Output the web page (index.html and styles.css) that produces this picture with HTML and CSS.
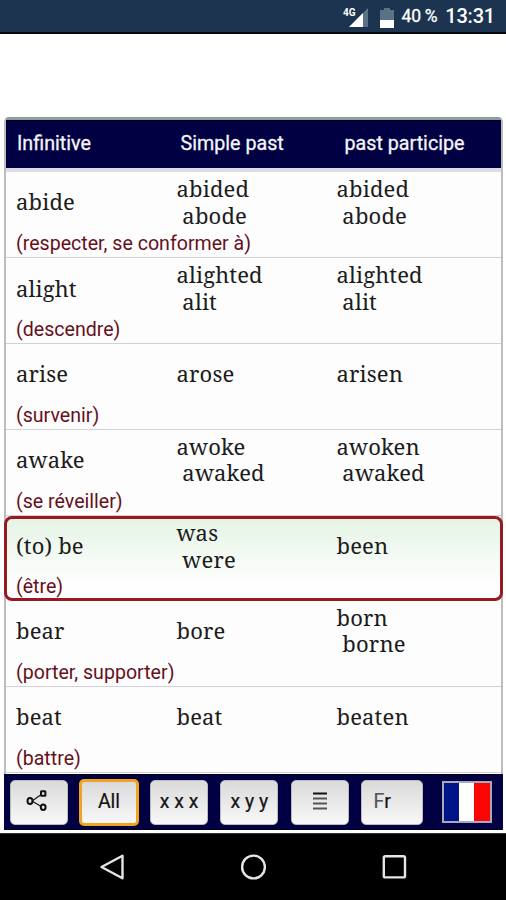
FILE: index.html
```html
<!DOCTYPE html>
<html lang="fr">
<head>
  <meta charset="UTF-8">
  <meta name="viewport" content="width=device-width, initial-scale=1.0">
  <title>Irregular verbs</title>
  <link rel="stylesheet" href="styles.css">
</head>
<body>
  <div class="status_bar">
    <svg class="signal" width="28" height="22" viewBox="0 0 28 22">
      <path d="M6 20 L25 1 V20 Z" fill="#5b7184"/>
      <path d="M6 20 L20 6 V20 Z" fill="#fff"/>
      <text x="0" y="9" class="network">4G</text>
    </svg>
    <svg class="battery" width="14" height="20" viewBox="0 0 14 20">
      <path d="M4 0 H10 V2 H14 V12 H0 V2 H4 Z" fill="#5b7184"/>
      <path d="M0 12 H14 V20 H0 Z" fill="#fff"/>
    </svg>
    <span class="percent">40 %</span>
    <span class="clock">13:31</span>
  </div>
  <div class="main_wrapper">
    <div class="verb_table">
      <div class="table_head">
        <span>Infinitive</span>
        <span>Simple past</span>
        <span>past participe</span>
      </div>
      <div class="verb_list">
        <div class="verb_row">
          <div class="forms"><span>abide</span><span>abided<br>&nbsp;abode</span><span>abided<br>&nbsp;abode</span></div>
          <p>(respecter, se conformer à)</p>
        </div>
        <div class="verb_row">
          <div class="forms"><span>alight</span><span>alighted<br>&nbsp;alit</span><span>alighted<br>&nbsp;alit</span></div>
          <p>(descendre)</p>
        </div>
        <div class="verb_row">
          <div class="forms"><span>arise</span><span>arose</span><span>arisen</span></div>
          <p>(survenir)</p>
        </div>
        <div class="verb_row">
          <div class="forms"><span>awake</span><span>awoke<br>&nbsp;awaked</span><span>awoken<br>&nbsp;awaked</span></div>
          <p>(se réveiller)</p>
        </div>
        <div class="verb_row selected">
          <div class="forms"><span>(to) be</span><span>was<br>&nbsp;were</span><span>been</span></div>
          <p>(être)</p>
        </div>
        <div class="verb_row">
          <div class="forms"><span>bear</span><span>bore</span><span>born<br>&nbsp;borne</span></div>
          <p>(porter, supporter)</p>
        </div>
        <div class="verb_row">
          <div class="forms"><span>beat</span><span>beat</span><span>beaten</span></div>
          <p>(battre)</p>
        </div>
      </div>
    </div>
    <div class="toolbar">
      <button class="share_btn" type="button" aria-label="Share">
        <svg width="22" height="22" viewBox="0 0 22 22" fill="none" stroke="#111">
          <path d="M6 11 L16 4 M6 11 L16 17" stroke-width="1.1"/>
          <ellipse cx="4" cy="11" rx="2.5" ry="2.9" stroke-width="2" fill="#e8e8e8"/>
          <rect x="15" y="1.2" width="4.4" height="4.6" rx="0.5" stroke-width="2" fill="#e8e8e8"/>
          <ellipse cx="17.2" cy="17.2" rx="2.4" ry="2.7" stroke-width="2" fill="#e8e8e8"/>
        </svg>
      </button>
      <button class="all_btn" type="button">All</button>
      <button class="xxx_btn" type="button">x x x</button>
      <button class="xyy_btn" type="button">x y y</button>
      <button class="list_btn" type="button" aria-label="List">
        <svg width="14" height="18" viewBox="0 0 14 18">
          <path d="M0 1.5 H14" stroke="#111" stroke-width="2"/>
          <path d="M0 6.5 H14 M0 11.5 H14 M0 16.5 H14" stroke="#555" stroke-width="2"/>
        </svg>
      </button>
      <button class="lang_btn" type="button"><span>F</span>r</button>
      <div class="flag"></div>
    </div>
  </div>
  <div class="nav_bar">
    <svg width="26" height="26" viewBox="0 0 26 26"><path d="M2.5 13 L23.5 1.8 V24.2 Z"/></svg>
    <svg width="26" height="26" viewBox="0 0 26 26"><circle cx="13.5" cy="13" r="11.4"/></svg>
    <svg width="26" height="26" viewBox="0 0 26 26"><rect x="2.8" y="2.2" width="21.2" height="21.2" rx="1.5"/></svg>
  </div>
</body>
</html>
```
FILE: styles.css
```css
* {
  box-sizing: border-box;
}
body {
  margin: 0;
  width: 506px;
  height: 900px;
  overflow: hidden;
  display: flex;
  flex-direction: column;
  background: #fff;
  font-family: Roboto, Arial, sans-serif;
}
.status_bar {
  display: flex;
  align-items: center;
  justify-content: flex-end;
  height: 34px;
  padding: 0 11px 0 0;
  background: #1c3450;
  border-bottom: 2px solid #05080f;
  color: #fff;
}
.signal {
  margin: 3px 9px 0 0;
}
.network {
  font-size: 10px;
  font-weight: 700;
  fill: #fff;
}
.battery {
  margin: 3px 8px 0 0;
}
.percent {
  margin-right: 8px;
  font-size: 17.5px;
  letter-spacing: -0.3px;
  -webkit-text-stroke: 0.3px #fff;
}
.clock {
  font-size: 20px;
  font-weight: 500;
  letter-spacing: -0.2px;
}
.main_wrapper {
  flex: 1;
  display: flex;
  flex-direction: column;
  padding: 83px 3px 0 4px;
}
.verb_table {
  height: 657px;
  border: 2px solid #bdbdbf;
  border-top: 3px solid #8f9c98;
  border-bottom: 0;
  border-radius: 5px 5px 0 0;
}
.table_head {
  display: grid;
  grid-template-columns: 163.5px 164px 1fr;
  align-items: center;
  height: 48px;
  padding: 0 0 3px 11px;
  border-top: 1px solid #000018;
  background: #000042;
  color: #f4f4f8;
  font-size: 19.7px;
  -webkit-text-stroke: 0.3px #f4f4f8;
}
.verb_list {
  border-top: 4px solid #dcdce4;
  background: #fdfdfe;
}
.verb_row {
  height: 85.8px;
  padding: 0.5px 0 0 10px;
  border-bottom: 1px solid #d2d2d6;
}
.verb_row:first-child {
  height: 86.3px;
}
.forms {
  display: grid;
  grid-template-columns: 160.5px 160px 1fr;
  align-items: center;
  height: 58px;
  font-family: "Noto Serif", "DejaVu Serif Condensed", "DejaVu Serif", serif;
  font-stretch: condensed;
  font-size: 22px;
  letter-spacing: 0.15px;
  line-height: 26.5px;
  color: #1c1c1c;
}
.verb_row p {
  margin: 0;
  padding-top: 0.5px;
  font-size: 19.6px;
  line-height: 26px;
  color: #66101c;
}
.verb_row.selected {
  margin: 0.5px -2px 0;
  padding: 0 0 0 9px;
  height: 84.8px;
  border: 3px solid #951b20;
  border-radius: 8px;
  background: linear-gradient(#e5f4e5, #fdfefd 80%);
}
.selected .forms {
  height: 52px;
}
.selected p {
  padding-top: 3px;
}
.toolbar {
  display: flex;
  align-items: center;
  height: 56px;
  padding: 0 11px 0 6px;
  border: 1px solid #000018;
  border-width: 1px 0;
  background: #000042;
}
.toolbar button {
  display: flex;
  flex-shrink: 0;
  align-items: center;
  justify-content: center;
  height: 45px;
  width: 58px;
  margin: 0 12.4px 0 0;
  padding: 0 0 2px;
  border: 1px solid #bbb;
  border-radius: 5px;
  background: linear-gradient(#dadada, #f8f8f8);
  color: #141414;
  font-family: inherit;
  font-size: 19.5px;
  -webkit-text-stroke: 0.2px;
}
.toolbar .share_btn {
  padding: 0 4px 2px 0;
  margin-right: 11px;
}
.toolbar .all_btn {
  width: 60px;
  height: 47px;
  margin-right: 11px;
  border: 3px solid #f2a21c;
}
.toolbar .lang_btn {
  width: 62px;
  margin-right: 19px;
  padding-right: 20px;
}
.lang_btn span {
  color: #555;
}
.flag {
  flex-shrink: 0;
  width: 50px;
  height: 42px;
  border: 2px solid #aaa9b8;
  background: linear-gradient(90deg, #001489 33%, #fff 33% 66%, #fb0505 66%);
}
.nav_bar {
  display: flex;
  align-items: center;
  justify-content: center;
  gap: 115px;
  height: 67px;
  border-top: 1px solid #333;
  background: #000;
}
.nav_bar svg {
  fill: none;
  stroke: #e6e6e6;
  stroke-width: 2.4;
  stroke-linejoin: round;
}
```
